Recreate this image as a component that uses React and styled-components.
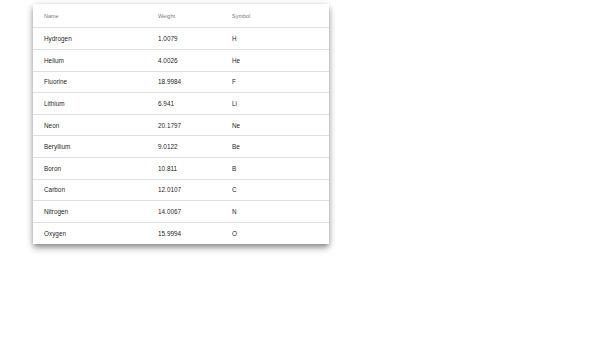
import React from "react";
import styled, { createGlobalStyle } from "styled-components";

const Global = createGlobalStyle`
  html, body { margin: 0; padding: 0; background: #fff; }
  body { font-family: "Liberation Sans", Arial, Helvetica, sans-serif; }
  #root { min-height: 337px; }
`;

const Page = styled.div`
  padding: 4px 0 24px 33px;
`;

const Table = styled.div`
  width: 296px;
  background: #fff;
  box-shadow: 0 3px 5px -1px rgba(0,0,0,.3), 0 5px 7px 0 rgba(0,0,0,.18), 0 1px 8px 0 rgba(0,0,0,.14);
`;

const Row = styled.div`
  display: grid;
  grid-template-columns: 114px 74px 1fr;
  align-items: center;
  padding-left: 11px;
  height: ${p => (p.$header ? "24.4px" : "21.6px")};
  border-bottom: ${p => (p.$last ? "none" : "1px solid rgba(0,0,0,.12)")};
  box-sizing: border-box;
  font-size: ${p => (p.$header ? "5.5px" : "6.4px")};
  color: ${p => (p.$header ? "rgba(0,0,0,.6)" : "rgba(0,0,0,.92)")};
`;

const Cell = styled.div`
  white-space: nowrap;
`;

const data = [
  ["Hydrogen", "1.0079", "H"],
  ["Helium", "4.0026", "He"],
  ["Fluorine", "18.9984", "F"],
  ["Lithium", "6.941", "Li"],
  ["Neon", "20.1797", "Ne"],
  ["Beryllium", "9.0122", "Be"],
  ["Boron", "10.811", "B"],
  ["Carbon", "12.0107", "C"],
  ["Nitrogen", "14.0067", "N"],
  ["Oxygen", "15.9994", "O"],
];

export default function App() {
  return (
    <>
      <Global />
      <Page>
        <Table>
          <Row $header>
            <Cell>Name</Cell>
            <Cell>Weight</Cell>
            <Cell>Symbol</Cell>
          </Row>
          {data.map((r, i) => (
            <Row key={r[0]} $last={i === data.length - 1}>
              <Cell>{r[0]}</Cell>
              <Cell>{r[1]}</Cell>
              <Cell>{r[2]}</Cell>
            </Row>
          ))}
        </Table>
      </Page>
    </>
  );
}
